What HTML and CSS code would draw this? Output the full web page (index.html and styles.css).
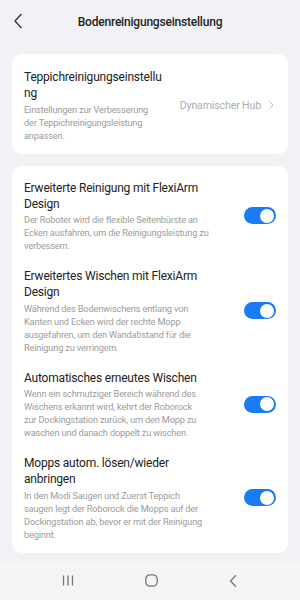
FILE: index.html
```html
<!DOCTYPE html>
<html lang="de">
<head>
<meta charset="utf-8">
<link rel="stylesheet" href="styles.css">
</head>
<body>
<div class="screen">
  <header class="header">
    <svg class="back" width="10" height="16" viewBox="0 0 10 16"><path d="M8 1.5 L2 8 L8 14.5" fill="none" stroke="#333" stroke-width="1.3" stroke-linecap="round" stroke-linejoin="round"/></svg>
    <div class="title">Bodenreinigungseinstellung</div>
  </header>
  <div class="ghost-line"></div>
  <main class="main">
    <section class="card card-top">
      <div class="row">
        <div class="text narrow">
          <div class="item-title">Teppichreinigungseinstellung</div>
          <div class="item-desc">Einstellungen zur Verbesserung der Teppichreinigungsleistung anpassen.</div>
        </div>
        <div class="value">
          <span>Dynamischer Hub</span>
          <svg width="6" height="10" viewBox="0 0 6 10"><path d="M1 1 L5 5 L1 9" fill="none" stroke="#c4c4c4" stroke-width="1"/></svg>
        </div>
      </div>
    </section>
    <section class="card card-list">
      <div class="row">
        <div class="text">
          <div class="item-title">Erweiterte Reinigung mit FlexiArm Design</div>
          <div class="item-desc">Der Roboter wird die flexible Seitenbürste an Ecken ausfahren, um die Reinigungsleistung zu verbessern.</div>
        </div>
        <div class="toggle"><div class="knob"></div></div>
      </div>
      <div class="row">
        <div class="text">
          <div class="item-title">Erweitertes Wischen mit FlexiArm Design</div>
          <div class="item-desc">Während des Bodenwischens entlang von Kanten und Ecken wird der rechte Mopp ausgefahren, um den Wandabstand für die Reinigung zu verringern.</div>
        </div>
        <div class="toggle"><div class="knob"></div></div>
      </div>
      <div class="row">
        <div class="text">
          <div class="item-title">Automatisches erneutes Wischen</div>
          <div class="item-desc desc-tight">Wenn ein schmutziger Bereich während des Wischens erkannt wird, kehrt der Roborock zur Dockingstation zurück, um den Mopp zu waschen und danach doppelt zu wischen.</div>
        </div>
        <div class="toggle"><div class="knob"></div></div>
      </div>
      <div class="row">
        <div class="text">
          <div class="item-title">Mopps autom. lösen/wieder anbringen</div>
          <div class="item-desc">In den Modi Saugen und Zuerst Teppich saugen legt der Roborock die Mopps auf der Dockingstation ab, bevor er mit der Reinigung beginnt.</div>
        </div>
        <div class="toggle"><div class="knob"></div></div>
      </div>
    </section>
  </main>
  <nav class="navbar">
    <svg width="12" height="11" viewBox="0 0 12 11"><path d="M1.5 0.5 V10.5 M6 0.5 V10.5 M10.5 0.5 V10.5" stroke="#777" stroke-width="1.3"/></svg>
    <svg width="13" height="13" viewBox="0 0 13 13"><rect x="0.8" y="0.8" width="11.4" height="11.4" rx="4.2" fill="none" stroke="#777" stroke-width="1.3"/></svg>
    <svg width="8" height="12" viewBox="0 0 8 12"><path d="M6.5 0.8 L1.5 6 L6.5 11.2" fill="none" stroke="#777" stroke-width="1.3" stroke-linecap="round"/></svg>
  </nav>
</div>
</body>
</html>
```

FILE: styles.css
```css
* { box-sizing: border-box; }
html, body { margin: 0; padding: 0; }
body {
  background: #f2f2f6;
  font-family: Roboto, "Liberation Sans", Arial, sans-serif;
  color: #222;
}
.screen {
  width: 300px;
  height: 600px;
  display: flex;
  flex-direction: column;
  overflow: hidden;
}
.header {
  flex-shrink: 0;
  height: 41px;
  display: flex;
  align-items: center;
  justify-content: center;
  position: relative;
}
.back {
  position: absolute;
  left: 13px;
  top: 13px;
}
.title {
  font-size: 12px;
  font-weight: 500;
  letter-spacing: -0.2px;
  color: #222;
  padding-top: 2px;
}
.ghost-line {
  flex-shrink: 0;
  height: 1px;
  margin: 0 22px;
  background: #f7f7fa;
}
.main {
  flex: 1;
  min-height: 0;
  padding: 12px 12px 0;
  display: flex;
  flex-direction: column;
  gap: 12px;
}
.card {
  background: #fff;
  border-radius: 10px;
  padding: 14px 12px 12px;
}
.card-top { padding-top: 15px; }
.card-list {
  display: flex;
  flex-direction: column;
  gap: 16px;
}
.row {
  display: flex;
  align-items: center;
  justify-content: space-between;
}
.text { width: 186px; }
.text.narrow { width: 142px; }
.narrow .item-desc { max-width: 136px; }
.item-desc.desc-tight { max-width: 177px; }
.item-title {
  font-size: 12px;
  letter-spacing: -0.2px;
  line-height: 16px;
  color: #222;
  overflow-wrap: anywhere;
}
.item-desc {
  margin-top: 1.5px;
  font-size: 9.2px;
  letter-spacing: -0.15px;
  line-height: 13px;
  color: #9c9c9c;
}
.value {
  display: flex;
  align-items: center;
  gap: 7px;
  font-size: 10.5px;
  letter-spacing: -0.1px;
  color: #adadad;
  padding-right: 2px;
}
.toggle {
  width: 32px;
  height: 17px;
  border-radius: 9px;
  background: #1a7cf5;
  display: flex;
  align-items: center;
  justify-content: flex-end;
  padding: 0 2px;
}
.knob {
  width: 14px;
  height: 14px;
  border-radius: 50%;
  background: #fff;
}
.navbar {
  flex-shrink: 0;
  height: 36px;
  background: #f4f4f4;
  border-top: 1px solid #fafafa;
  display: flex;
  align-items: center;
  justify-content: space-around;
  padding: 0 28px 4px 27px;
}
```
